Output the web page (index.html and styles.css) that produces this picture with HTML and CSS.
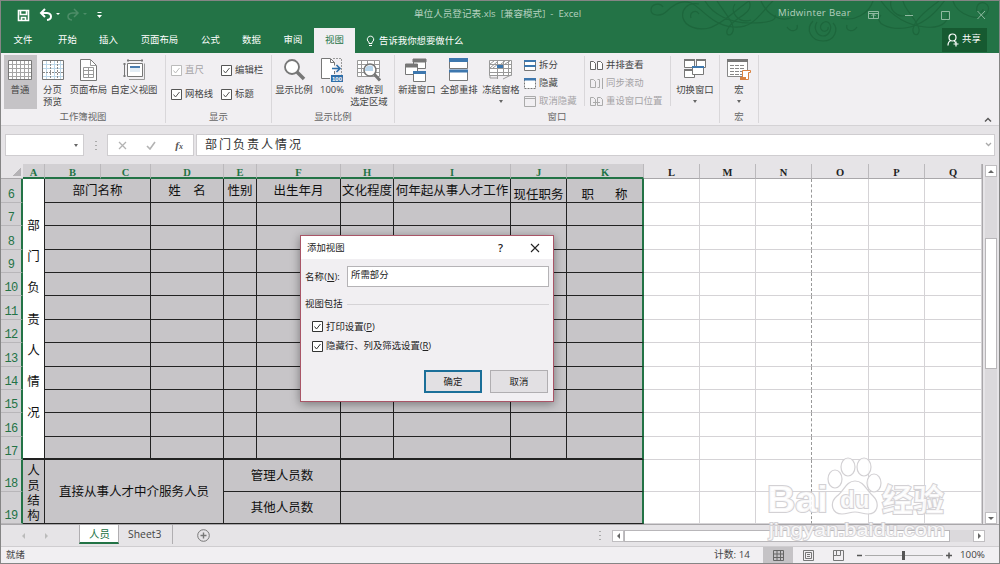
FILE: index.html
```html
<!DOCTYPE html>
<html lang="zh-CN">
<head>
    <meta charset="UTF-8">
    <meta name="viewport" content="width=device-width, initial-scale=1.0">
    <title>单位人员登记表.xls - Excel</title>
    <link rel="stylesheet" href="styles.css">
</head>
<body>
    <div class="window">
        <div class="titlebar">
            <svg class="swirls" width="360" height="52" viewBox="0 0 360 52">
                <path d="M22 6c-3-5-12-3-12 3s10 7 16 1S40-2 50 2s20 22 42 24S120 10 134-2"/>
                <path d="M58 3c-12-2-18 6-16 14s14 13 26 10S96 8 108 0M50 17c-2-6 5-9 8-4M64 0c8 14 26 22 44 22s28-2 26-8"/>
                <path d="M94 3c-6 8 4 20 16 16M108 0c6 12-14 16-20 26-6 8 2 11 4 4S84 12 76 0"/>
                <path d="M120 0c6 14 20 22 32 16M146 26c4 6 12 4 10-2M216 26c-4 6-12 4-10-2"/>
                <path d="M172 20c-8 8-2 20 10 20s16-12 10-18M176 21c-4 6 0 14 6 14s10-8 6-13c-4-4-10 2-8 6s8 2 7-2"/>
                <path d="M200 17c14 4 28-5 32-17M240 14c-8 8 8 15 24 13s30-14 40-28M250 0c-2 8 6 18 16 14"/>
                <path d="M262 0c2 10 14 18 16 28 1 8-7 7-6 0s12-18 26-28M240 0c10 14 24 24 44 26s24-8 22-14"/>
                <path d="M312 0c4 14 28 22 34 12s-8-14-10-6 6 6 6 2"/>
            </svg>
            <div class="quick">
                <svg width="100" height="14" viewBox="0 0 100 14" fill="none" stroke="#fff">
                    <path d="M1.500 2.500h10v10h-10zM3.500 2.500v4h6v-4M4.500 12.500v-3h4v3" stroke-width="1.600"/>
                    <path d="M28 1l-4 4 4 4M24.500 5h5.500q4 .5 4 3.500t-4 3.500" stroke-width="2"/>
                    <path d="M39 5h4l-2 2z" fill="#fff" stroke="none"/>
                    <path d="M57 1l4 4-4 4M60.500 5h-5q-4.500.5-4.500 3.500t4 3.500" stroke="#4d8d68" stroke-width="1.500"/>
                    <path d="M66 5h4l-2 2z" fill="#4d8d68" stroke="none"/>
                    <path d="M80.500 4.500h4"/><path d="M80 7h5l-2.500 3z" fill="#fff" stroke="none"/>
                </svg>
            </div>
            <div class="doc-title">单位人员登记表.xls&nbsp; [兼容模式]&nbsp; -&nbsp; Excel</div>
            <div class="user">Midwinter Bear</div>
            <svg class="win-btns" width="122" height="12" viewBox="0 0 122 12" fill="none" stroke="#8fb9a0">
                <path d="M.5 2.500h10v7H.5zM.5 4.500h10M5.500 9V5.500M3.500 7l2-2 2 2"/>
                <path d="M37 6.500h8"/>
                <path d="M73.500 2.500h8v8h-8z"/>
                <path d="M109.500 2l7.500 8M117 2l-7.500 8"/>
            </svg>
        </div>

        <div class="tabs">
            <div class="tab tab-file">文件</div>
            <div class="tab tab-home">开始</div>
            <div class="tab tab-insert">插入</div>
            <div class="tab tab-layout">页面布局</div>
            <div class="tab tab-formula">公式</div>
            <div class="tab tab-data">数据</div>
            <div class="tab tab-review">审阅</div>
            <div class="tab tab-view">视图</div>
            <div class="tell-me">
                <svg width="9" height="12" viewBox="0 0 9 12" fill="none" stroke="#fff"><path d="M3 8.500V7.200a3.200 3.200 0 1 1 3 0v1.300zM3 10.500h3"/></svg>
                <span>告诉我你想要做什么</span>
            </div>
            <div class="share">
                <svg width="12" height="14" viewBox="0 0 12 14" fill="none" stroke="#fff" stroke-width="1.200"><circle cx="5.500" cy="4.500" r="3.500"/><path d="M1 12.500q0-4 3-5M7 7.500l1.500 2M9 8.500v5M6.500 11h5"/></svg>
                <span>共享</span>
            </div>
        </div>

        <div class="ribbon">
            <div class="group group-views">
                <div class="tools">
                    <div class="big w33 pressed">
                        <svg class="icon" width="24" height="22" viewBox="0 0 24 22" fill="none" stroke="#a5a5a5"><path d="M.5 1.500h23v19H.5z" fill="#fff" stroke="#777"/><path d="M1 5.500h22M1 9.500h22M1 13.500h22M1 17.500h22M4.500 2v18M8.500 2v18M12.500 2v18M16.500 2v18M20.500 2v18"/></svg>
                        <span>普通</span>
                    </div>
                    <div class="big w33">
                        <svg class="icon" width="22" height="22" viewBox="0 0 22 22" fill="none" stroke="#b5b5b5"><path d="M.5 1.500h21v19H.5z" fill="#fff" stroke="#777"/><path d="M1 5.500h20M1 9.500h20M1 17.500h20M4.500 2v18M12.500 2v18M18.500 2v18" stroke="#bcd6e8"/><path d="M8.500 2v18M15.500 2v18M1 13.500h20" stroke="#888" stroke-dasharray="2 1"/></svg>
                        <span>分页<br>预览</span>
                    </div>
                    <div class="big w40">
                        <svg class="icon" width="17" height="22" viewBox="0 0 17 22" fill="none" stroke="#777"><path d="M.5.5h10l6 6v15H.5z" fill="#fff"/><path d="M10.500.5v6h6M3.500 8.500h10v10h-10zM3.500 11.500h10M3.500 15.500h10M8.500 8.500v10" stroke="#999"/></svg>
                        <span>页面布局</span>
                    </div>
                    <div class="big w52">
                        <svg class="icon" width="22" height="22" viewBox="0 0 22 22" fill="none" stroke="#777"><path d="M4.500 4.500h15v13h-15z" fill="#fff"/><path d="M4 1.500h16M5 0v3M19 0v3M1.500 4v14M0 5h3M0 17h3"/><path d="M17.500 20.500h4v-16M6 20.500h15" stroke="#999"/><path d="M7 7h10v2H7z" fill="#4a7db0" stroke="none"/><path d="M7 9h10v4H7z" fill="#e3edf5" stroke="none"/></svg>
                        <span>自定义视图</span>
                    </div>
                </div>
                <div class="group-name">工作簿视图</div>
            </div>

            <div class="group group-show">
                <div class="tools checks">
                    <div class="check off"><svg class="box" viewBox="0 0 11 11"><path d="M.5.5h10v10H.5z"/><path d="M2.500 5.500L4.500 8l4-5" fill="none"/></svg>直尺</div>
                    <div class="check"><svg class="box" viewBox="0 0 11 11"><path d="M.5.5h10v10H.5z"/><path d="M2.500 5.500L4.500 8l4-5" fill="none"/></svg>编辑栏</div>
                    <div class="check"><svg class="box" viewBox="0 0 11 11"><path d="M.5.5h10v10H.5z"/><path d="M2.500 5.500L4.500 8l4-5" fill="none"/></svg>网格线</div>
                    <div class="check"><svg class="box" viewBox="0 0 11 11"><path d="M.5.5h10v10H.5z"/><path d="M2.500 5.500L4.500 8l4-5" fill="none"/></svg>标题</div>
                </div>
                <div class="group-name">显示</div>
            </div>

            <div class="group group-zoom">
                <div class="tools">
                    <div class="big w44">
                        <svg class="icon" width="24" height="24" viewBox="0 0 24 24" fill="none" stroke="#777"><circle cx="10" cy="9" r="7" fill="#fff" stroke-width="1.800"/><path d="M15 14l7 7" stroke-width="3.500"/></svg>
                        <span>显示比例</span>
                    </div>
                    <div class="big w32">
                        <svg class="icon" width="22" height="24" viewBox="0 0 22 24" fill="none" stroke="#777"><path d="M9.500.5H.5v20h9v-4h4v-12z" fill="#fff" stroke="none"/><path d="M9 .5H.5v20H9M9.500.5v4h4M9.500.5l4 4v3M13.500 13v3"/><path d="M12 .5h8.500v16" stroke-dasharray="2 1" stroke="#999"/><path d="M11 10.500h8M15.500 7l3.500 3.500-3.500 3.500" stroke="#2f6fa9" stroke-width="1.600"/><path d="M10 17h12v7H10z" fill="#2f6fa9" stroke="none"/><text x="11" y="23" class="tiny">100</text></svg>
                        <span>100%</span>
                    </div>
                    <div class="big w42">
                        <svg class="icon" width="24" height="24" viewBox="0 0 24 24" fill="none" stroke="#999"><path d="M.5 2.500h22v16H.5z" fill="#fff"/><path d="M1 6.500h21M1 10.500h21M1 14.500h21M4.500 3v15M10.500 3v15M17.500 3v15"/><circle cx="13" cy="12" r="6" fill="#fff" stroke="#777" stroke-width="1.600"/><path d="M8 13a5 5 0 0 1 8-4.500V13z" fill="#b9d6ec" stroke="none"/><path d="M17.500 16.500l5.500 6" stroke="#777" stroke-width="3"/></svg>
                        <span>缩放到<br>选定区域</span>
                    </div>
                </div>
                <div class="group-name">显示比例</div>
            </div>

            <div class="group group-window">
                <div class="tools">
                    <div class="big w42">
                        <svg class="icon" width="24" height="24" viewBox="0 0 24 24" fill="#fff" stroke="#777"><path d="M8.500 1.500h12v9h-12z"/><path d="M8 1h13v3H8z" fill="#777"/><path d="M.5 6.500h12v10H.5z"/><path d="M.5 6h12v3H.5z" fill="#777"/><path d="M8.500 13.500h12v10h-12z"/><path d="M8 13h13v3H8z" fill="#3d77ae" stroke="none"/></svg>
                        <span>新建窗口</span>
                    </div>
                    <div class="big w42">
                        <svg class="icon" width="20" height="24" viewBox="0 0 20 24" fill="#fff" stroke="#777"><path d="M.5.500h18v10H.5zM.5 12.500h18v10H.5z"/><path d="M0 0h19v4H0zM0 11.500h19v3H0z" fill="#3d77ae" stroke="none"/></svg>
                        <span>全部重排</span>
                    </div>
                    <div class="big w42">
                        <svg class="icon" width="24" height="24" viewBox="0 0 24 24" fill="none" stroke="#999"><path d="M.5 2.500h22v15H.5z" fill="#fff"/><path d="M1 6.500h21M1 10.500h21M1 14.500h21M8.500 3v18M14.500 3v15M19.500 3v15M1 6l4-3M1 10l7-6M4 10l5-4M12 6l4-3M16 6l5-3M1 17v3h7M14 21l8-4"/><path d="M8 7h6v3H8z" fill="#3d77ae" stroke="none"/></svg>
                        <span>冻结窗格</span>
                        <i class="caret"></i>
                    </div>
                    <div class="small-list list-split">
                        <div><svg width="12" height="11" viewBox="0 0 12 11" fill="#fff" stroke="#777"><path d="M.5.5h11v10H.5z"/><path d="M0 0h12v2H0zM0 5h12v2H0z" fill="#3d77ae" stroke="none"/></svg>拆分</div>
                        <div><svg width="12" height="11" viewBox="0 0 12 11" fill="#fff" stroke="#777"><path d="M.5.5h11v10H.5z" stroke-dasharray="2 1"/><path d="M0 0h12v2.500H0z" fill="#3d77ae" stroke="none"/></svg>隐藏</div>
                        <div class="off"><svg width="12" height="11" viewBox="0 0 12 11" fill="#f1eff2" stroke="#aaa"><path d="M.5.5h11v10H.5zM.5 2.500h11"/></svg>取消隐藏</div>
                    </div>
                    <div class="small-list list-side">
                        <div><svg width="13" height="11" viewBox="0 0 13 11" fill="#fff" stroke="#666"><path d="M.5 1.500h3l2 2v6h-5zM7.500 1.500h3l2 2v6h-5z"/></svg>并排查看</div>
                        <div class="off"><svg width="13" height="11" viewBox="0 0 13 11" fill="none" stroke="#aaa"><path d="M.5 1.500h3l2 2v6h-5zM7.500 1.500h2v8h-2M12.500 0v11"/></svg>同步滚动</div>
                        <div class="off"><svg width="13" height="11" viewBox="0 0 13 11" fill="none" stroke="#aaa"><path d="M.5 1.500h3l2 2v6h-5zM7.500 1.500h3l2 2v6h-5zM3 6.500h7"/></svg>重设窗口位置</div>
                    </div>
                    <div class="big w48">
                        <svg class="icon" width="24" height="24" viewBox="0 0 24 24" fill="#fff" stroke="#777"><path d="M1.500 1.500h10v8h-10zM13.500 1.500h9v8h-9zM1.500 11.500h10v8h-10z"/><path d="M1 1h11v2H1zM13 1h10v2H13zM1 11h10v2H1z" fill="#777" stroke="none"/><path d="M9.500 8.500h11v8h-11z"/><path d="M9 8h12v2H9z" fill="#3d77ae" stroke="none"/></svg>
                        <span>切换窗口</span>
                        <i class="caret"></i>
                    </div>
                </div>
                <div class="group-name">窗口</div>
            </div>

            <div class="group group-macro">
                <div class="tools">
                    <div class="big w38">
                        <svg class="icon" width="24" height="24" viewBox="0 0 24 24" fill="#fff" stroke="#888"><path d="M.5 1.500h20v17H.5z"/><path d="M0 1h21v3H0z" fill="#777" stroke="none"/><path d="M3 7.500h15M3 10.500h15M3 13.500h15M3 16.500h15" stroke-dasharray="4 1"/><path d="M15.500 12.500h8v2h-2v7h-8v-2h2z" stroke="#d9813f"/><path d="M13 19h6v3h-6z" fill="#d9813f" stroke="none"/></svg>
                        <span>宏</span>
                        <i class="caret"></i>
                    </div>
                </div>
                <div class="group-name">宏</div>
            </div>
            <svg class="collapse" width="8" height="5" viewBox="0 0 8 5" fill="none" stroke="#555" stroke-width="1.400"><path d="M1 4.500l3-3 3 3"/></svg>
        </div>

        <div class="formula-bar">
            <div class="name-box"><i class="caret"></i></div>
            <div class="dots"></div>
            <div class="fx-box">
                <svg width="9" height="9" viewBox="0 0 9 9" stroke="#b3b3b3" stroke-width="1.300"><path d="M1 1l7 7M8 1L1 8"/></svg>
                <svg width="10" height="9" viewBox="0 0 10 9" fill="none" stroke="#b3b3b3" stroke-width="1.600"><path d="M1 5l3 3 5-7"/></svg>
                <span class="fx">f<small>x</small></span>
            </div>
            <div class="formula">
                <span>部门负责人情况</span>
                <svg width="7" height="5" viewBox="0 0 7 5" fill="none" stroke="#aaa" stroke-width="1.300"><path d="M1 1l2.500 2.500L6 1"/></svg>
            </div>
        </div>

        <div class="sheet-area">
            <div class="sheet" id="sheet">
                <div class="corner"></div>
            </div>
            <div class="vscroll">
                <div class="arrow"><i class="up"></i></div>
                <div class="track"><div class="thumb"></div></div>
                <div class="arrow"><i class="down"></i></div>
            </div>
        </div>

        <div class="sheet-tabs">
            <i class="left nav-left"></i>
            <i class="right nav-right"></i>
            <div class="sheet-tab active">人员</div>
            <div class="sheet-tab">Sheet3</div>
            <svg class="add" width="13" height="13" viewBox="0 0 13 13" fill="none" stroke="#777"><circle cx="6.500" cy="6.500" r="5.800"/><path d="M6.500 3.500v6M3.500 6.500h6" stroke-width="1.400"/></svg>
            <div class="dots"></div>
            <div class="hscroll">
                <div class="arrow"><i class="left"></i></div>
                <div class="hthumb"></div>
                <div class="arrow"><i class="right"></i></div>
            </div>
        </div>

        <div class="status">
            <span class="ready">就绪</span>
            <span class="count">计数: 14</span>
            <div class="view pressed"><svg width="11" height="11" viewBox="0 0 11 11" fill="none" stroke="#666"><path d="M.5.5h10v10H.5zM.5 4h10M.5 7.500h10M4 .5v10M7.500.5v10"/></svg></div>
            <div class="view"><svg width="11" height="11" viewBox="0 0 11 11" fill="none" stroke="#777"><path d="M.5.5h10v10H.5zM2.500 2.500h6v6h-6zM4 4.500h3M4 6.500h3"/></svg></div>
            <div class="view"><svg width="11" height="11" viewBox="0 0 11 11" fill="none" stroke="#777"><path d="M.5.5h10v10H.5zM3.500.5v5h-3M7.500.5v5h-4"/></svg></div>
            <svg class="zoom" width="96" height="11" viewBox="0 0 96 11" stroke="#555"><path d="M1 5.500h5M90 5.500h6M93 2.500v6" stroke-width="1.500"/><path d="M9 5.500h78" stroke="#aaa"/><path d="M47.500 1v9" stroke-width="3"/></svg>
            <span class="percent">100%</span>
        </div>
    </div>

    <svg class="watermark" width="190" height="100" viewBox="0 0 190 100">
        <ellipse cx="69" cy="26" rx="7" ry="9"/>
        <ellipse cx="82" cy="14" rx="7" ry="9"/>
        <ellipse cx="98" cy="14" rx="7" ry="9"/>
        <ellipse cx="108" cy="30" rx="7" ry="9"/>
        <path d="M89 28c-9 0-11 10-18 15-8 7-5 18 5 18 5 0 8-2 13-2s8 2 13 2c10 0 12-11 5-18-7-6-9-15-18-15z"/>
        <text class="mark" x="1" y="59" textLength="61" lengthAdjust="spacingAndGlyphs">Bai</text>
        <text class="mark du" x="74" y="55">du</text>
        <text class="mark cn" x="116" y="58">经验</text>
        <text class="mark url" x="3" y="83" textLength="176" lengthAdjust="spacingAndGlyphs">jingyan.baidu.com</text>
    </svg>

    <div class="dialog">
        <div class="dialog-title">
            <span>添加视图</span>
            <b>?</b>
            <svg width="10" height="10" viewBox="0 0 10 10" stroke="#222" stroke-width="1.100"><path d="M1 1l8 8M9 1L1 9"/></svg>
        </div>
        <div class="dialog-body">
            <div class="field">
                <span>名称(<u>N</u>):</span>
                <div class="input">所需部分</div>
            </div>
            <div class="legend"><span>视图包括</span></div>
            <div class="option"><svg class="box" viewBox="0 0 11 11"><path d="M.5.5h10v10H.5z"/><path d="M2.500 5.500L4.500 8l4-5" fill="none"/></svg>打印设置(<u>P</u>)</div>
            <div class="option"><svg class="box" viewBox="0 0 11 11"><path d="M.5.5h10v10H.5z"/><path d="M2.500 5.500L4.500 8l4-5" fill="none"/></svg>隐藏行、列及筛选设置(<u>R</u>)</div>
            <div class="buttons">
                <div class="btn primary">确定</div>
                <div class="btn">取消</div>
            </div>
        </div>
    </div>

    <script src="sheet.js"></script>
</body>
</html>
```
FILE: styles.css
```css
* {
    margin: 0;
    padding: 0;
    box-sizing: border-box;
}

body {
    font-family: "Open Sans", "Noto Sans CJK SC", sans-serif;
    font-size: 9.4px;
    line-height: 12px;
    color: #444;
    overflow: hidden;
}

i {
    font-style: normal;
}

svg {
    display: block;
    flex: none;
}

.window {
    width: 1000px;
    height: 564px;
    border: 1px solid #858585;
    background: #e6e4e7;
    display: flex;
    flex-direction: column;
    white-space: nowrap;
}

/* title bar */
.titlebar {
    position: relative;
    height: 27px;
    background: #237346;
    display: flex;
    align-items: center;
    color: #b4d0bf;
}

.swirls {
    position: absolute;
    left: 640px;
    top: 0;
    fill: none;
    stroke: #1d663c;
    stroke-width: 1.2;
    z-index: 1;
}

.quick {
    padding-left: 16px;
    width: 413px;
}

.doc-title {
    width: 364px;
    font-size: 9.6px;
    padding-bottom: 2px;
}

.user {
    width: 90px;
    font-family: "Open Sans", sans-serif;
    font-size: 9.6px;
    letter-spacing: 0.3px;
    padding-bottom: 3px;
    position: relative;
    z-index: 2;
}

.win-btns {
    position: relative;
    z-index: 2;
}

/* ribbon tabs */
.tabs {
    height: 25px;
    background: #237346;
    color: #fff;
    display: flex;
    align-items: stretch;
    line-height: 23px;
}

.tab {
    text-align: center;
}

.tab-file {
    width: 44px;
}

.tab-home {
    width: 45px;
}

.tab-insert {
    width: 37px;
}

.tab-layout {
    width: 65px;
}

.tab-formula {
    width: 37px;
}

.tab-data {
    width: 45px;
}

.tab-review {
    width: 38px;
}

.tab-view {
    width: 41px;
    margin-left: 2px;
    background: #f1eff2;
    color: #237346;
}

.tell-me {
    display: flex;
    align-items: center;
    gap: 4px;
    padding-left: 11px;
    flex: 1;
}

.share {
    position: relative;
    z-index: 2;
    width: 45px;
    height: 24px;
    margin-right: 12px;
    padding-left: 5px;
    background: #165a31;
    display: flex;
    align-items: center;
    gap: 3px;
    line-height: 20px;
}

.share span {
    padding-bottom: 2px;
}

/* ribbon */
.ribbon {
    height: 73px;
    background: #f1eff2;
    border-bottom: 1px solid #d4d2d5;
    display: flex;
    padding: 2px 0 2px;
}

.group {
    border-right: 1px solid #d9d7da;
    display: flex;
    flex-direction: column;
}

.group-views {
    width: 165px;
}

.group-show {
    width: 106px;
}

.group-zoom {
    width: 123px;
}

.group-window {
    width: 325px;
}

.group-macro {
    width: 39px;
}

.tools {
    height: 58px;
    display: flex;
}

.group-views .tools {
    padding-left: 3px;
}

.group-name {
    text-align: center;
    color: #666;
}

.big {
    display: flex;
    flex-direction: column;
    align-items: center;
    height: 54px;
    padding-top: 3px;
    text-align: center;
    line-height: 11.5px;
}

.group-views .big {
    margin-left: -0.5px;
}

.big .icon {
    height: 24px;
    margin-bottom: 2px;
}

.big span {
    display: block;
}

.w32 { width: 32px; }
.w33 { width: 33px; }
.w38 { width: 38px; }
.w40 { width: 40px; }
.w42 { width: 42px; }
.w44 { width: 44px; }
.w48 { width: 48px; }
.w52 { width: 52px; }

.pressed {
    background: #c5c3c6;
}

.tiny {
    font: bold 6px "Liberation Sans", sans-serif;
    fill: #fff;
    stroke: none;
}

.caret {
    border: 2.5px solid transparent;
    border-top: 3px solid #666;
    border-bottom: 0;
}

.big .caret {
    border-top-width: 3px;
    margin-top: 4px;
}

.checks {
    display: grid;
    grid-template-columns: 50px 50px;
    grid-template-rows: 24px 24px;
    padding: 3px 0 0 5px;
}

.check {
    display: flex;
    align-items: center;
    gap: 3px;
}

.box {
    width: 11px;
    height: 11px;
    fill: #fff;
    stroke: #555;
}

.off {
    color: #a5a3a6;
}

.off .box {
    stroke: #bbb;
}

.small-list {
    display: flex;
    flex-direction: column;
    height: 50px;
    margin-top: 1px;
}

.small-list div {
    height: 18px;
    flex: none;
    display: flex;
    align-items: center;
    gap: 3px;
}

.list-split {
    width: 61px;
    margin-left: 2px;
    border-right: 1px solid #d9d7da;
}

.list-side {
    width: 86px;
    padding-left: 5px;
    border-right: 1px solid #d9d7da;
}

.group-window .tools {
    padding-left: 1px;
}

.collapse {
    margin: auto 7px 1px auto;
}

/* formula bar */
.formula-bar {
    height: 38px;
    padding: 8px 4px 0;
    display: flex;
}

.name-box,
.fx-box,
.formula {
    height: 22px;
    background: #fff;
    border: 1px solid #cfcdd0;
    display: flex;
    align-items: center;
}

.name-box {
    width: 79px;
    justify-content: flex-end;
    padding-right: 5px;
}

.dots {
    width: 2px;
    height: 9px;
    background: repeating-linear-gradient(#aaa 0 1px, transparent 1px 4px);
}

.formula-bar .dots {
    margin: 7px 10px 0 11px;
}

.fx-box {
    width: 87px;
    padding: 0 10px;
    justify-content: space-between;
}

.fx {
    font: italic bold 11px "Liberation Serif", serif;
    color: #555;
}

.fx small {
    font-size: 8px;
}

.formula {
    flex: 1;
    margin-left: 2px;
    padding: 0 2px 1px 8px;
    justify-content: space-between;
    font-size: 12px;
    letter-spacing: 2px;
    color: #333;
}

/* worksheet */
.sheet-area {
    display: flex;
    height: 361px;
    border-bottom: 1px solid #a9a7aa;
}

.sheet {
    width: 982px;
    display: grid;
    grid-template-columns: 22px 22px 56px 50px 73px 33px 84px 53px 117px 56px 77px 56px 56px 56px 57px 56px 57px;
    grid-template-rows: 15px 24px 23px 24px 23px 23px 24px 23px 24px 23px 23px 24px 23px 32px 32px;
    border-right: 1px solid #a9a7aa;
    overflow: hidden;
}

.corner {
    background: linear-gradient(135deg, transparent 50%, #b5b3b6 50%) 11px 3px / 9px 9px no-repeat;
    border-bottom: 1px solid #a9a7aa;
}

.col-head,
.row-head {
    font: 12px/17px "Liberation Mono", monospace;
    color: #222;
    text-align: center;
    border-right: 1px solid #bbb9bc;
}

.col-head {
    border-bottom: 1px solid #a9a7aa;
    font: bold 10.5px/18px "Liberation Serif", serif;
}

.col-head.sel {
    background: #d2d0d3;
    color: #237346;
    border-bottom: 2px solid #237346;
}

.row-head {
    display: flex;
    align-items: flex-end;
    justify-content: center;
    line-height: 13px;
    letter-spacing: -0.8px;
    background: #d2d0d3;
    color: #237346;
    border-bottom: 1px solid #b8b6b9;
    border-right: 2px solid #237346;
}

.cell {
    border-right: 1px solid #d5d3d6;
    border-bottom: 1px solid #d5d3d6;
    background: #fff;
}

.cell.sel {
    background: #c7c5c8;
    border-color: #222;
    color: #111;
    font-size: 12.5px;
    display: flex;
    align-items: center;
    justify-content: center;
    white-space: pre;
}

.cell.active-cell {
    background: #fff;
}

.cell.edge {
    border-right: 2px solid #237346;
}

.cell.page-break {
    border-right: 1px dashed #999;
}

.cell.low {
    padding-top: 8px;
}

.cell.gap {
    word-spacing: 18px;
}

.cell.thick {
    border-bottom-width: 2px;
}

.cell.vertical {
    line-height: 31.2px;
    align-items: flex-start;
    padding-top: 31px;
}

.cell.vertical.tight {
    line-height: 15px;
    padding-top: 3px;
}

/* scroll bars */
.vscroll {
    width: 16px;
    padding: 1px 2px 0;
    display: flex;
    flex-direction: column;
}

.arrow {
    width: 12px;
    height: 12px;
    background: #fff;
    border: 1px solid #c0bec1;
    display: flex;
    align-items: center;
    justify-content: center;
    flex: none;
}

.up,
.down,
.left,
.right {
    border: 3px solid transparent;
}

.up {
    border-top: 0;
    border-bottom-color: #666;
}

.down {
    border-bottom: 0;
    border-top-color: #666;
}

.left {
    border-left: 0;
    border-right-color: #666;
}

.right {
    border-right: 0;
    border-left-color: #666;
}

.track {
    flex: 1;
    width: 12px;
    padding-top: 61px;
    background: #dbd9dc;
}

.thumb {
    height: 131px;
    background: #fff;
    border: 1px solid #b8b6b9;
}

/* sheet tabs */
.sheet-tabs {
    height: 21px;
    display: flex;
    align-items: center;
}

.nav-left {
    margin-left: 21px;
    border-right-color: #bbb;
}

.nav-right {
    margin-left: 20px;
    border-left-color: #bbb;
}

.sheet-tab {
    font-size: 10.4px;
    line-height: 18px;
    height: 19px;
    padding: 0 9px;
    align-self: flex-start;
}

.sheet-tab + .sheet-tab {
    width: 54px;
    border-right: 1px solid #b0aeb1;
}

.sheet-tab.active {
    width: 40px;
    margin-left: 31px;
    background: #fff;
    color: #237346;
    border-bottom: 2px solid #237346;
    border-left: 1px solid #b0aeb1;
    border-right: 1px solid #b0aeb1;
}

.add {
    margin-left: 24px;
}

.sheet-tabs .dots {
    margin-left: 389px;
}

.hscroll {
    display: flex;
    width: 373px;
    margin-left: 11px;
    background: #dbd9dc;
}

.hscroll .arrow:last-child {
    margin-left: auto;
}

.hthumb {
    width: 326px;
    background: #fff;
    border: 1px solid #b8b6b9;
}

/* status bar */
.status {
    flex: 1;
    background: #f1eff2;
    border-top: 1px solid #cfcdd0;
    display: flex;
    align-items: center;
}

.ready {
    width: 708px;
    padding-left: 5px;
}

.count {
    width: 54px;
    padding-left: 5px;
    font-size: 9.8px;
}

.view {
    width: 30px;
    height: 16px;
    display: flex;
    align-items: center;
    justify-content: center;
}

.zoom {
    margin-left: 3px;
}

.percent {
    margin-left: 8px;
    font-size: 9.8px;
    padding-bottom: 1px;
}

/* watermark over the sheet */
.watermark {
    position: absolute;
    left: 766px;
    top: 453px;
    fill: rgba(255, 255, 255, 0.85);
    stroke: #d3d1d4;
    stroke-width: 1.2;
}

.mark {
    font: bold 37px "Liberation Sans", sans-serif;
    paint-order: stroke;
    stroke-width: 2;
}

.du {
    font-size: 24px;
}

.cn {
    font: bold 31px "Noto Sans CJK SC", sans-serif;
}

.url {
    font: 19px "Liberation Sans", sans-serif;
    stroke-width: 1.8;
}

/* dialog */
.dialog {
    position: absolute;
    left: 300px;
    top: 235px;
    width: 254px;
    height: 167px;
    border: 1px solid #a95567;
    background: #f1eff2;
    box-shadow: 0 2px 9px rgba(0, 0, 0, 0.4);
    color: #222;
    white-space: nowrap;
}

.dialog-title {
    height: 23px;
    background: #fff;
    display: flex;
    align-items: center;
    padding: 0 13px 0 6px;
}

.dialog-title b {
    margin-left: auto;
    margin-right: 27px;
    font-size: 11px;
    font-weight: 600;
}

.dialog-body {
    padding: 7px 4px 0;
}

.field {
    display: flex;
    align-items: center;
}

.field span {
    width: 42px;
    letter-spacing: 0.2px;
}

.input {
    flex: 1;
    height: 21px;
    background: #fff;
    border: 1px solid #b5b3b6;
    padding: 2px 3px;
}

.legend {
    display: flex;
    align-items: center;
    gap: 4px;
    margin: 11px 0 7px;
}

.legend::after {
    content: "";
    flex: 1;
    height: 1px;
    background: #d5d3d6;
}

.option {
    display: flex;
    align-items: center;
    height: 19.5px;
    padding-left: 7px;
}

.option .box {
    margin-right: 3px;
    stroke: #333;
}

.buttons {
    display: flex;
    justify-content: flex-end;
    gap: 8px;
    margin-top: 14px;
    padding-right: 1px;
}

.btn {
    width: 58px;
    height: 23px;
    line-height: 21px;
    text-align: center;
    background: #e2e0e3;
    border: 1px solid #b0aeb1;
}

.btn.primary {
    border: 2px solid #1b6f99;
    line-height: 19px;
}
```
FILE: sheet.js
```js
const sheet = document.getElementById('sheet');
const columns = 'ABCDEFHIJKLMNOPQ'.split('');
const LAST_SELECTED = 9; // column K

function add(className, text, row, col, rowSpan = 1, colSpan = 1) {
    const el = document.createElement('div');
    el.className = className;
    el.textContent = text;
    el.style.gridArea = `${row} / ${col} / span ${rowSpan} / span ${colSpan}`;
    sheet.appendChild(el);
}

columns.forEach((name, i) => {
    add(`col-head ${i <= LAST_SELECTED ? 'sel' : ''}`, name, 1, i + 2);
});

for (let n = 6; n <= 19; n++) {
    add('row-head', n, n - 4, 1);
}

// merged title cells in column A
add('cell sel active-cell vertical thick', '部\n门\n负\n责\n人\n情\n况', 2, 2, 12);
add('cell sel vertical tight', '人\n员\n结\n构', 14, 2, 2);

// row 6 headings: text, column, span, extra class
const headings = [
    ['部门名称', 3, 2, ''],
    ['姓\u3000名', 5, 1, ''],
    ['性别', 6, 1, ''],
    ['出生年月', 7, 1, ''],
    ['文化程度', 8, 1, ''],
    ['何年起从事人才工作', 9, 1, ''],
    ['现任职务', 10, 1, 'low'],
    ['职 称', 11, 1, 'low gap edge']
];

headings.forEach(([text, col, span, extra]) => {
    add(`cell sel ${extra}`, text, 2, col, 1, span);
    for (let row = 3; row <= 13; row++) {
        const edge = col === 11 ? 'edge' : '';
        const thick = row === 13 ? 'thick' : '';
        add(`cell sel ${edge} ${thick}`, '', row, col, 1, span);
    }
});

add('cell sel', '直接从事人才中介服务人员', 14, 3, 2, 3);
add('cell sel', '管理人员数', 14, 6, 1, 2);
add('cell sel', '其他人员数', 15, 6, 1, 2);
add('cell sel edge', '', 14, 8, 1, 4);
add('cell sel edge', '', 15, 8, 1, 4);

// empty columns L to Q
for (let row = 2; row <= 15; row++) {
    for (let col = 12; col <= 17; col++) {
        add(`cell ${col === 14 ? 'page-break' : ''}`, '', row, col);
    }
}
```
